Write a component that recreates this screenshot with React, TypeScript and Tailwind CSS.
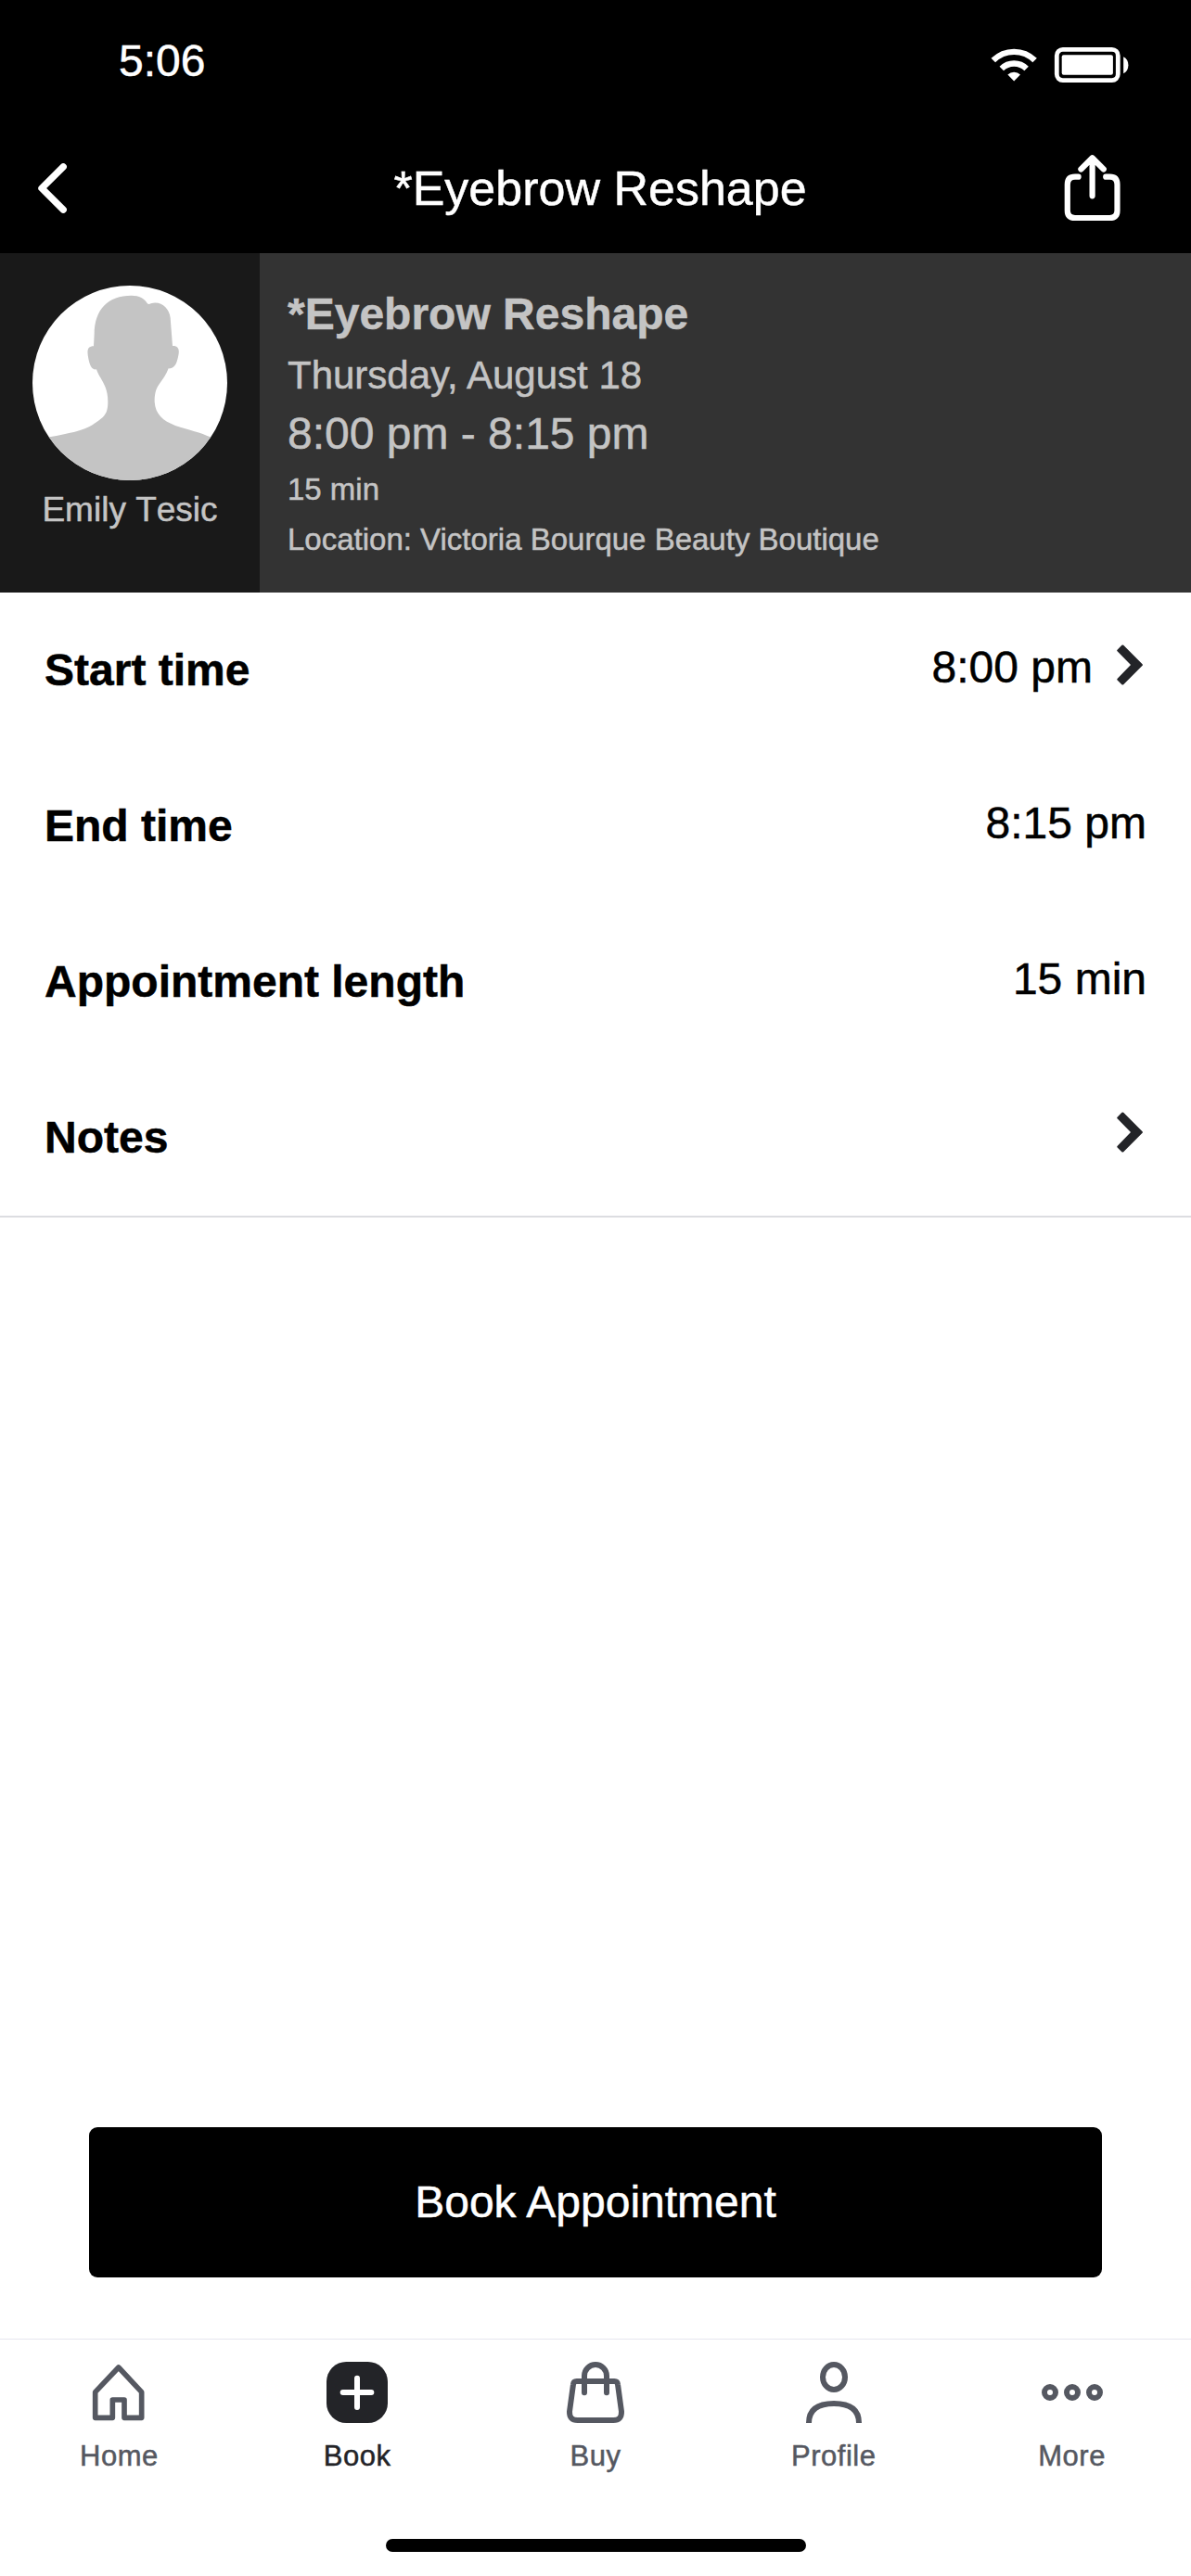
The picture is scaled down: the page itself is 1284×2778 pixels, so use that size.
import type { ReactNode } from "react";

function StatusBar() {
  return (
    <div className="flex h-[130px] items-start justify-between pl-[128px] pr-[67px]">
      <span className="mt-[36px] text-[48px] leading-[60px]">5:06</span>
      <div className="mt-[51px] flex gap-[18px]">
        <svg className="mt-px h-[36px] w-[50px]" viewBox="0 0 50 36" fill="none" stroke="#fff" strokeWidth="6.4">
          <path d="M2.8 13.1A31.7 31.7 0 0 1 47.6 13.1" />
          <path d="M11.8 22A19 19 0 0 1 38.6 22" />
          <path d="M25.2 35.4L18.4 28.6A9.6 9.6 0 0 1 32 28.6Z" fill="#fff" stroke="none" />
        </svg>
        <svg className="h-[38px] w-[81px]" viewBox="0 0 81 38" fill="none">
          <rect x="3.3" y="2.4" width="66" height="33.2" rx="6.5" stroke="#fff" strokeWidth="4.8" />
          <rect x="8.7" y="8.2" width="55.2" height="21.6" rx="2" fill="#fff" />
          <path d="M75.2 10.2C78.6 12 80.4 15 80.4 19.2S78.6 26.8 75.2 28.2Z" fill="#fff" />
        </svg>
      </div>
    </div>
  );
}

function TitleBar() {
  return (
    <div className="grid h-[143px] grid-cols-[200px_1fr_200px]">
      <svg className="ml-[38px] mt-[43px] h-[60px] w-[38px]" viewBox="0 0 38 60" fill="none" stroke="#fff" strokeWidth="7.4" strokeLinecap="round" strokeLinejoin="round">
        <path d="M30.2 6.8L7 30L30.2 53.2" />
      </svg>
      <h1 className="mt-[33px] pl-[10px] text-center text-[52px] leading-[80px]">*Eyebrow Reshape</h1>
      <svg className="ml-[60px] mt-[34px] h-[78px] w-[68px]" viewBox="1144 164 68 78" fill="none" stroke="#fff" strokeWidth="6.2" strokeLinecap="round" strokeLinejoin="round">
        <path d="M1162.6 190.7H1159Q1150.8 190.7 1150.8 199V227Q1150.8 235 1159 235H1196.4Q1204.5 235 1204.5 227V199Q1204.5 190.7 1196.4 190.7H1192.2" />
        <path d="M1177.6 211.3V171M1165.4 182.5L1177.6 170.2L1189.8 182.5" />
      </svg>
    </div>
  );
}

function Avatar() {
  return (
    <svg className="h-[210px] w-[210px] rounded-full bg-white" viewBox="105 114 630 630">
      <path
        fill="#c4c4c4"
        d="M105 614L160 604C222 592 270 584 300 564C335 541 349 532 349 490C349 450 336 432 325 412C317 398 315 394 312 385C296 387 290 370 286 350C280 322 284 310 303 310L305 270C306 190 350 146 425 146C450 146 468 156 476 171Q480 176 488 172C520 162 548 188 551 218L558 309C577 308 581 322 577 340C572 367 564 384 545 382C538 402 525 419 515 433C502 452 500 468 500 490C503 532 527 551 567 567C612 581 650 590 680 604L735 620V744H105Z"
      />
    </svg>
  );
}

function Summary() {
  return (
    <section className="flex h-[366px] text-[#c4c4c4]">
      <div className="flex w-[280px] flex-col items-center bg-[#191919] pt-[35px]">
        <Avatar />
        <p className="text-[37px] leading-[64px] [font-kerning:none]">Emily Tesic</p>
      </div>
      <div className="flex-1 bg-[#333333] pl-[30px] pt-[35px]">
        <p className="text-[48px] font-bold leading-[61px]">*Eyebrow Reshape</p>
        <p className="text-[42px] leading-[71px]">Thursday, August 18</p>
        <p className="text-[48px] leading-[55px]">8:00 pm - 8:15 pm</p>
        <p className="text-[33px] leading-[65px]">15 min</p>
        <p className="text-[33px] leading-[43px]">Location: Victoria Bourque Beauty Boutique</p>
      </div>
    </section>
  );
}

function Row({ label, value, chevron }: { label: string; value?: string; chevron?: boolean }) {
  return (
    <div className="flex h-[168px] items-center justify-between pl-12 text-[48px] leading-[60px]">
      <span className="font-bold">{label}</span>
      <div className={chevron ? "mb-[6px] flex items-center pr-[52px]" : "mb-[6px] flex items-center pr-[48px]"}>
        {value && <span>{value}</span>}
        {chevron && (
          <svg className="mb-[6px] ml-[26px] h-[44px] w-[28px]" viewBox="0 0 28 44" fill="#232428">
            <path d="M0.3 7Q0 6.3 0.6 5.8L5.4 0.8Q6.3 0 7.2 0.8L27.6 21.2Q28.3 22 27.6 22.8L7.2 43.2Q6.3 44 5.4 43.2L0.6 38.4Q0 37.8 0.5 37L15 22Z" />
          </svg>
        )}
      </div>
    </div>
  );
}

function Tab({ label, viewBox, active, children }: { label: string; viewBox: string; active?: boolean; children: ReactNode }) {
  return (
    <div className={active ? "flex flex-1 flex-col items-center text-[#232428]" : "flex flex-1 flex-col items-center text-[#555861]"}>
      <svg className="h-[66px] w-[66px]" viewBox={viewBox} fill="none" stroke="currentColor" strokeWidth="18" strokeLinejoin="round">
        {children}
      </svg>
      <span className="mt-[16px] text-[31px] leading-[40px] tracking-[0.5px]">{label}</span>
    </div>
  );
}

export default function App() {
  return (
    <main className="flex h-[2778px] w-[1284px] flex-col bg-white font-['Liberation_Sans',Arial,sans-serif] text-black [-webkit-text-stroke:0.5px_currentColor]">
      <header className="h-[273px] bg-black text-white">
        <StatusBar />
        <TitleBar />
      </header>
      <Summary />
      <section className="border-b-2 border-[#dcdde1]">
        <Row label="Start time" value="8:00 pm" chevron />
        <Row label="End time" value="8:15 pm" />
        <Row label="Appointment length" value="15 min" />
        <Row label="Notes" chevron />
      </section>
      <div className="flex-1" />
      <button className="mx-[96px] mb-[66px] h-[162px] rounded-[9px] bg-black text-[48px] text-white">Book Appointment</button>
      <nav className="flex h-[216px] border-t border-[#e6e6ee] pt-[24px]">
        <Tab label="Home" viewBox="106 141 198 198">
          <path strokeWidth="17" d="M129 239L204.5 159L279 239V322H223V264H185V322H129Z" />
        </Tab>
        <Tab label="Book" viewBox="876 141 198 198" active>
          <rect x="876" y="141" width="198" height="198" rx="64" fill="currentColor" stroke="none" />
          <path d="M929 240H1021M975 194V288" stroke="#fff" strokeLinecap="round" />
        </Tab>
        <Tab label="Buy" viewBox="87 141 198 198">
          <path strokeLinecap="round" d="M150 241V186A36 36 0 0 1 222 186V241" />
          <path d="M125 204H247Q257 204 258 214L270 302Q271 330 244 330H128Q101 330 102 302L114 214Q115 204 125 204Z" />
        </Tab>
        <Tab label="Profile" viewBox="858 141 198 198">
          <ellipse cx="957" cy="190.5" rx="36" ry="40.5" />
          <path d="M876 339C876 296 905 276 957 276S1038 296 1038 339" />
        </Tab>
        <Tab label="More" viewBox="129 141 198 198">
          <circle cx="156" cy="240" r="18" />
          <circle cx="228" cy="240" r="18" />
          <circle cx="300" cy="240" r="18" />
        </Tab>
      </nav>
      <div className="mb-[26px] ml-[416px] h-[14px] w-[453px] shrink-0 rounded-full bg-black" />
    </main>
  );
}
